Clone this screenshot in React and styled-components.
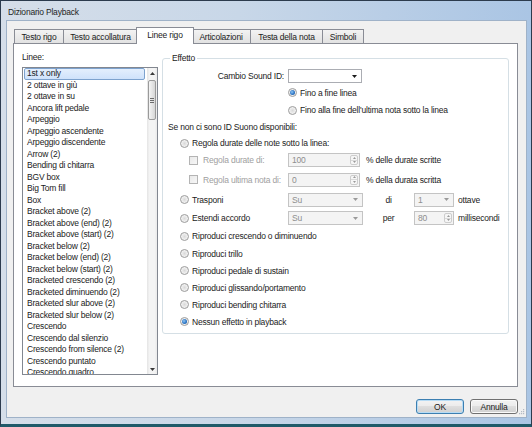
import React from "react";
import styled, { createGlobalStyle } from "styled-components";

const GlobalStyle = createGlobalStyle`
  html, body {
    margin: 0;
    padding: 0;
    background: #ffffff;
  }
  body {
    font-family: "Liberation Sans", Arial, sans-serif;
  }
`;

const lines = [
  "1st x only",
  "2 ottave in giù",
  "2 ottave in su",
  "Ancora lift pedale",
  "Arpeggio",
  "Arpeggio ascendente",
  "Arpeggio discendente",
  "Arrow (2)",
  "Bending di chitarra",
  "BGV box",
  "Big Tom fill",
  "Box",
  "Bracket above (2)",
  "Bracket above (end) (2)",
  "Bracket above (start) (2)",
  "Bracket below (2)",
  "Bracket below (end) (2)",
  "Bracket below (start) (2)",
  "Bracketed crescendo (2)",
  "Bracketed diminuendo (2)",
  "Bracketed slur above (2)",
  "Bracketed slur below (2)",
  "Crescendo",
  "Crescendo dal silenzio",
  "Crescendo from silence (2)",
  "Crescendo puntato",
  "Crescendo quadro",
];

const tabs = [
  { label: "Testo rigo", w: 50 },
  { label: "Testo accollatura", w: 75 },
  { label: "Linee rigo", w: 58, active: true },
  { label: "Articolazioni", w: 60 },
  { label: "Testa della nota", w: 73 },
  { label: "Simboli", w: 42 },
];

const Window = styled.div`
  width: 532px;
  height: 427px;
  box-sizing: border-box;
  display: flex;
  flex-direction: column;
  border: 1px solid #2c3b4d;
  border-bottom: 3px solid #1f5a69;
  padding: 0 4px 6px 5px;
  background: linear-gradient(to right, #d5dee9 0%, #c8d7e8 45%, #aac5e4 100%);
  font-family: "Liberation Sans", Arial, sans-serif;
  font-size: 8.5px;
  letter-spacing: -0.2px;
  color: #1b1b1b;
`;

const TitleBar = styled.div`
  height: 19px;
  box-sizing: border-box;
  padding: 2px 0 0 2px;
  display: flex;
  align-items: center;
  font-size: 8.5px;
  color: #1e1e1e;
`;

const Client = styled.div`
  position: relative;
  flex: 1;
  display: flex;
  flex-direction: column;
  background: #f0f0f0;
  border: 1px solid #9fb2c8;
  padding: 6px 8px 3px 6px;
`;

const TabRow = styled.div`
  display: flex;
  height: 17px;
  margin-bottom: -1px;
  padding-left: 1px;
`;

const Tab = styled.div`
  box-sizing: border-box;
  width: ${(p) => p.$w}px;
  display: flex;
  align-items: center;
  justify-content: center;
  border: 1px solid #898c95;
  border-bottom: none;
  white-space: nowrap;
  margin-left: -1px;
  &:first-child {
    margin-left: 0;
  }
  ${(p) =>
    p.$active
      ? `
    position: relative;
    z-index: 1;
    height: 17px;
    margin-left: -2px;
    margin-right: -2px;
    background: #ffffff;
    padding-bottom: 2px;
  `
      : `
    height: 14px;
    margin-top: 2px;
    background: linear-gradient(#f3f3f3, #eaeaea 50%, #e2e2e2 100%);
  `}
`;

const Panel = styled.div`
  box-sizing: border-box;
  height: 344px;
  flex: none;
  display: flex;
  gap: 4px;
  background: #ffffff;
  border: 1px solid #898c95;
  padding: 8px 8px 10px 8px;
`;

const LeftCol = styled.div`
  width: 136px;
  display: flex;
  flex-direction: column;
`;

const Caption = styled.div`
  height: 10px;
  line-height: 10px;
  margin-bottom: 5px;
`;

const ListBox = styled.div`
  box-sizing: border-box;
  height: 308px;
  display: flex;
  border: 1px solid #828790;
  background: #ffffff;
`;

const Items = styled.div`
  flex: 1;
  overflow: hidden;
`;

const Item = styled.div`
  box-sizing: border-box;
  height: 11.5px;
  line-height: 9.5px;
  margin: 0 2px 0 1px;
  padding-left: 2px;
  border: 1px solid ${(p) => (p.$selected ? "#7da2ce" : "transparent")};
  border-radius: 2px;
  white-space: nowrap;
  background: ${(p) =>
    p.$selected ? "linear-gradient(#e4effd, #cfe2fb)" : "transparent"};
`;

const ScrollBar = styled.div`
  width: 10px;
  display: flex;
  flex-direction: column;
  background: linear-gradient(to right, #e4e4e4, #f4f4f4 25%, #f4f4f4 75%, #eaeaea);
`;

const ScrollArrow = styled.div`
  height: 10px;
  display: flex;
  align-items: center;
  justify-content: center;
`;

const Thumb = styled.div`
  box-sizing: border-box;
  height: 40px;
  margin: 2px 1px 0;
  border: 1px solid #9a9a9a;
  border-radius: 2px;
  background: linear-gradient(to right, #f4f4f4, #e6e6e6 50%, #d6d6d6);
  display: flex;
  flex-direction: column;
  align-items: center;
  justify-content: center;
  gap: 1px;
`;

const Grip = styled.span`
  width: 4px;
  height: 1px;
  background: #6b6b6b;
`;

const Track = styled.div`
  flex: 1;
`;

const Tri = styled.svg`
  display: block;
  flex: none;
`;

const Arrow = ({ up, color = "#1b1b1b", w = 5, h = 3 }) => (
  <Tri width={w} height={h} viewBox="0 0 5 3">
    <path d={up ? "M0 3h5L2.5 0z" : "M0 0h5L2.5 3z"} fill={color} />
  </Tri>
);

const Group = styled.fieldset`
  flex: 1;
  align-self: flex-start;
  margin: 1px 0 0;
  padding: 0 0 3px 5px;
  border: 1px solid #d5dfe5;
  border-radius: 3px;
  min-width: 0;
`;

const Legend = styled.legend`
  padding: 0 2px;
  margin-left: 2px;
  line-height: 10px;
  height: 10px;
`;

const Rows = styled.div`
  padding-top: 5px;
  display: flex;
  flex-direction: column;
`;

const Row = styled.div`
  height: ${(p) => p.$h}px;
  display: flex;
  align-items: center;
  padding-left: ${(p) => p.$indent || 0}px;
  white-space: nowrap;
`;

const Lead = styled.div`
  box-sizing: border-box;
  width: 120px;
  flex: none;
  display: flex;
  align-items: center;
  justify-content: ${(p) => (p.$right ? "flex-end" : "flex-start")};
  padding-left: ${(p) => p.$indent || 0}px;
  padding-right: ${(p) => (p.$right ? 4 : 0)}px;
`;

const Option = styled.label`
  display: flex;
  align-items: center;
  gap: ${(p) => p.$gap || 3}px;
  color: ${(p) => (p.$disabled ? "#a0a0a0" : "#1b1b1b")};
`;

const Radio = styled.span`
  position: relative;
  box-sizing: border-box;
  width: 9px;
  height: 9px;
  flex: none;
  border-radius: 50%;
  border: 1px solid #9c9c9c;
  background: radial-gradient(circle at 50% 50%, #d9d9d9 0%, #eeeeee 55%, #f8f8f8 100%);
  &::after {
    content: "";
    display: ${(p) => (p.$checked ? "block" : "none")};
    position: absolute;
    left: 1px;
    top: 1px;
    width: 5px;
    height: 5px;
    border-radius: 50%;
    background: radial-gradient(circle at 40% 40%, #8fc6f4 0%, #2f77c7 55%, #134f93 100%);
  }
`;

const Check = styled.span`
  box-sizing: border-box;
  width: 9px;
  height: 9px;
  flex: none;
  border: 1px solid #b4b4b4;
  background: linear-gradient(135deg, #e9e9e9, #f7f7f7);
`;

const Field = styled.div`
  box-sizing: border-box;
  width: ${(p) => p.$w}px;
  height: 14px;
  flex: none;
  display: flex;
  align-items: center;
  padding-left: 3px;
  border: 1px solid ${(p) => (p.$disabled ? "#c4c4c4" : "#abadb3")};
  background: ${(p) => (p.$disabled ? "#f4f4f4" : "#ffffff")};
  color: ${(p) => (p.$disabled ? "#8e8e8e" : "#1b1b1b")};
`;

const Value = styled.span`
  flex: 1;
`;

const DropArrow = styled.div`
  margin-right: 4px;
`;

const Spin = styled.div`
  box-sizing: border-box;
  width: 8px;
  height: 10px;
  margin-right: 1px;
  display: flex;
  flex-direction: column;
  border: 1px solid #cdcdcd;
  border-radius: 2px;
  background: #f6f6f6;
`;

const SpinHalf = styled.div`
  flex: 1;
  display: flex;
  align-items: center;
  justify-content: center;
  & + & {
    border-top: 1px solid #dadada;
  }
`;

const Mid = styled.div`
  width: 51px;
  flex: none;
  text-align: center;
`;

const Suffix = styled.span`
  margin-left: ${(p) => p.$gap || 4}px;
`;

const ButtonRow = styled.div`
  display: flex;
  justify-content: flex-end;
  gap: 6px;
  margin-top: 12px;
`;

const Button = styled.button`
  box-sizing: border-box;
  width: 48px;
  height: 15px;
  padding: 0;
  font: inherit;
  letter-spacing: inherit;
  color: #1b1b1b;
  border-radius: 3px;
  border: 1px solid ${(p) => (p.$default ? "#3c7fb1" : "#707070")};
  background: linear-gradient(#f3f3f3 0%, #ececec 45%, #dedede 50%, #d0d0d0 100%);
  box-shadow: ${(p) => (p.$default ? "inset 0 0 0 1px #b7dcf5" : "inset 0 0 0 1px #fafafa")};
`;

const SizeGrip = styled.svg`
  position: absolute;
  right: 1px;
  bottom: 1px;
`;

const Combo = ({ w, value, disabled }) => (
  <Field $w={w} $disabled={disabled}>
    <Value>{value}</Value>
    <DropArrow>
      <Arrow color={disabled ? "#9a9a9a" : "#1b1b1b"} />
    </DropArrow>
  </Field>
);

const SpinField = ({ w, value }) => (
  <Field $w={w} $disabled>
    <Value>{value}</Value>
    <Spin>
      <SpinHalf>
        <Arrow up color="#9a9a9a" w={3} h={2} />
      </SpinHalf>
      <SpinHalf>
        <Arrow color="#9a9a9a" w={3} h={2} />
      </SpinHalf>
    </Spin>
  </Field>
);

const RadioOption = ({ checked, children }) => (
  <Option>
    <Radio $checked={checked} />
    {children}
  </Option>
);

const playbackOptions = [
  "Riproduci crescendo o diminuendo",
  "Riproduci trillo",
  "Riproduci pedale di sustain",
  "Riproduci glissando/portamento",
  "Riproduci bending chitarra",
];

export default function App() {
  return (
    <>
      <GlobalStyle />
      <Window>
        <TitleBar>Dizionario Playback</TitleBar>
        <Client>
          <TabRow>
            {tabs.map((t) => (
              <Tab key={t.label} $w={t.w} $active={t.active}>
                {t.label}
              </Tab>
            ))}
          </TabRow>
          <Panel>
            <LeftCol>
              <Caption>Linee:</Caption>
              <ListBox>
                <Items>
                  {lines.map((l, i) => (
                    <Item key={l} $selected={i === 0}>
                      {l}
                    </Item>
                  ))}
                </Items>
                <ScrollBar>
                  <ScrollArrow>
                    <Arrow up color="#3a3a3a" />
                  </ScrollArrow>
                  <Thumb>
                    <Grip />
                    <Grip />
                    <Grip />
                  </Thumb>
                  <Track />
                  <ScrollArrow>
                    <Arrow color="#3a3a3a" />
                  </ScrollArrow>
                </ScrollBar>
              </ListBox>
            </LeftCol>

            <Group>
              <Legend>Effetto</Legend>
              <Rows>
                <Row $h={16}>
                  <Lead $right>Cambio Sound ID:</Lead>
                  <Combo w={74} value="" />
                </Row>
                <Row $h={17} $indent={120}>
                  <RadioOption checked>Fino a fine linea</RadioOption>
                </Row>
                <Row $h={18} $indent={120}>
                  <RadioOption>Fino alla fine dell'ultima nota sotto la linea</RadioOption>
                </Row>
                <Row $h={16}>Se non ci sono ID Suono disponibili:</Row>
                <Row $h={16} $indent={12}>
                  <RadioOption>Regola durate delle note sotto la linea:</RadioOption>
                </Row>
                <Row $h={18}>
                  <Lead $indent={21}>
                    <Option $disabled $gap={5}>
                      <Check />
                      Regola durate di:
                    </Option>
                  </Lead>
                  <SpinField w={72} value="100" />
                  <Suffix $gap={6}>% delle durate scritte</Suffix>
                </Row>
                <Row $h={21}>
                  <Lead $indent={21}>
                    <Option $disabled $gap={5}>
                      <Check />
                      Regola ultima nota di:
                    </Option>
                  </Lead>
                  <SpinField w={72} value="0" />
                  <Suffix $gap={6}>% della durata scritta</Suffix>
                </Row>
                <Row $h={19}>
                  <Lead $indent={12}>
                    <RadioOption>Trasponi</RadioOption>
                  </Lead>
                  <Combo w={75} value="Su" disabled />
                  <Mid>di</Mid>
                  <Combo w={40} value="1" disabled />
                  <Suffix>ottave</Suffix>
                </Row>
                <Row $h={18}>
                  <Lead $indent={12}>
                    <RadioOption>Estendi accordo</RadioOption>
                  </Lead>
                  <Combo w={75} value="Su" disabled />
                  <Mid>per</Mid>
                  <SpinField w={40} value="80" />
                  <Suffix>millisecondi</Suffix>
                </Row>
                {playbackOptions.map((o, i) => (
                  <Row key={o} $h={i === 0 ? 18 : 17} $indent={12}>
                    <RadioOption>{o}</RadioOption>
                  </Row>
                ))}
                <Row $h={17} $indent={12}>
                  <RadioOption checked>Nessun effetto in playback</RadioOption>
                </Row>
              </Rows>
            </Group>
          </Panel>
          <ButtonRow>
            <Button $default>OK</Button>
            <Button>Annulla</Button>
          </ButtonRow>
          <SizeGrip width="7" height="7" viewBox="0 0 7 7">
            <g fill="#b3bac4">
              <rect x="5" y="0" width="1.2" height="1.2" />
              <rect x="3" y="2" width="1.2" height="1.2" />
              <rect x="5" y="2" width="1.2" height="1.2" />
              <rect x="1" y="4" width="1.2" height="1.2" />
              <rect x="3" y="4" width="1.2" height="1.2" />
              <rect x="5" y="4" width="1.2" height="1.2" />
            </g>
          </SizeGrip>
        </Client>
      </Window>
    </>
  );
}
